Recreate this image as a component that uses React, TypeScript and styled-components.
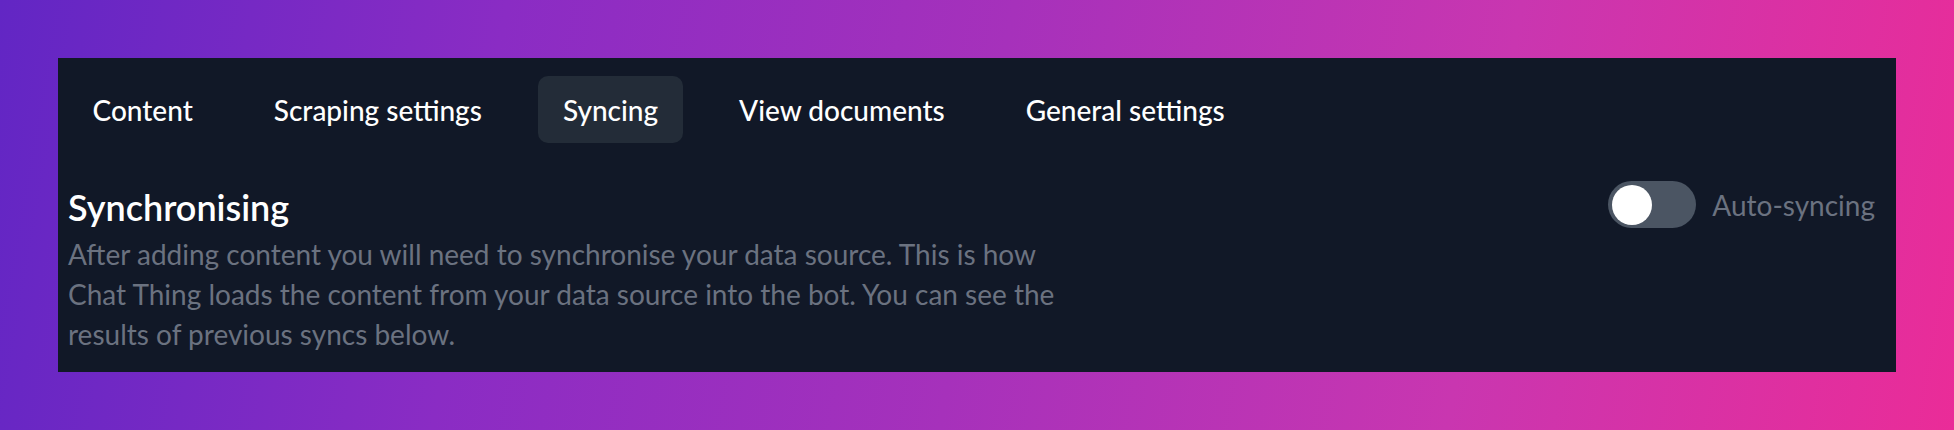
import React, { useState } from 'react'
import styled, { createGlobalStyle } from 'styled-components'

const GlobalStyle = createGlobalStyle`
    html, body {
        margin: 0;
        padding: 0;
    }
    body {
        font-family: Lato, 'Noto Sans', sans-serif;
        -webkit-font-smoothing: antialiased;
    }
`

const Backdrop = styled.div`
    box-sizing: border-box;
    width: 100%;
    height: 430px;
    padding: 58px;
    background: linear-gradient(100deg, #6226c4 0%, #8a2cc4 25%, #a631bb 50%, #c936b0 75%, #ea2c98 100%);
`

const Panel = styled.section`
    box-sizing: border-box;
    height: 314px;
    overflow: hidden;
    background: #111827;
    padding: 18px 21px 0 10px;
`

const TabList = styled.nav`
    display: flex;
    gap: 32px;
`

const Tab = styled.button<{ $active?: boolean }>`
    height: 67px;
    padding: 0 24.5px;
    border: none;
    border-radius: 10px;
    background: ${({ $active }) => ($active ? '#232c38' : 'transparent')};
    color: #ffffff;
    font-family: inherit;
    font-size: 28px;
    font-weight: 500;
    cursor: pointer;
`

const Header = styled.div`
    display: flex;
    justify-content: space-between;
    align-items: flex-start;
    margin-top: 38px;
`

const Intro = styled.div`
    max-width: 1000px;
`

const Title = styled.h2`
    margin: 0;
    color: #ffffff;
    font-size: 36px;
    line-height: 53px;
    font-weight: 600;
`

const Description = styled.p`
    margin: 0;
    color: #6b7280;
    font-size: 28px;
    line-height: 40px;
`

const ToggleField = styled.label`
    display: flex;
    align-items: center;
    gap: 16px;
    cursor: pointer;
`

const Track = styled.span<{ $on: boolean }>`
    display: flex;
    align-items: center;
    box-sizing: border-box;
    width: 88px;
    height: 47px;
    padding: 4px;
    border-radius: 24px;
    background: ${({ $on }) => ($on ? '#7c3aed' : '#4b5563')};
    justify-content: ${({ $on }) => ($on ? 'flex-end' : 'flex-start')};
`

const Knob = styled.span`
    width: 40px;
    height: 40px;
    border-radius: 50%;
    background: #ffffff;
`

const ToggleText = styled.span`
    color: #6b7280;
    font-size: 28px;
`

const tabs = ['Content', 'Scraping settings', 'Syncing', 'View documents', 'General settings']

const App = () => {
    const [active, setActive] = useState('Syncing')
    const [autoSync, setAutoSync] = useState(false)

    return (
        <Backdrop>
            <GlobalStyle />
            <Panel>
                <TabList>
                    {tabs.map((tab) => (
                        <Tab key={tab} $active={tab === active} onClick={() => setActive(tab)}>
                            {tab}
                        </Tab>
                    ))}
                </TabList>
                <Header>
                    <Intro>
                        <Title>Synchronising</Title>
                        <Description>
                            After adding content you will need to synchronise your data source. This is how
                            Chat Thing loads the content from your data source into the bot. You can see the
                            results of previous syncs below.
                        </Description>
                    </Intro>
                    <ToggleField onClick={() => setAutoSync(!autoSync)}>
                        <Track $on={autoSync}>
                            <Knob />
                        </Track>
                        <ToggleText>Auto-syncing</ToggleText>
                    </ToggleField>
                </Header>
            </Panel>
        </Backdrop>
    )
}

export default App
